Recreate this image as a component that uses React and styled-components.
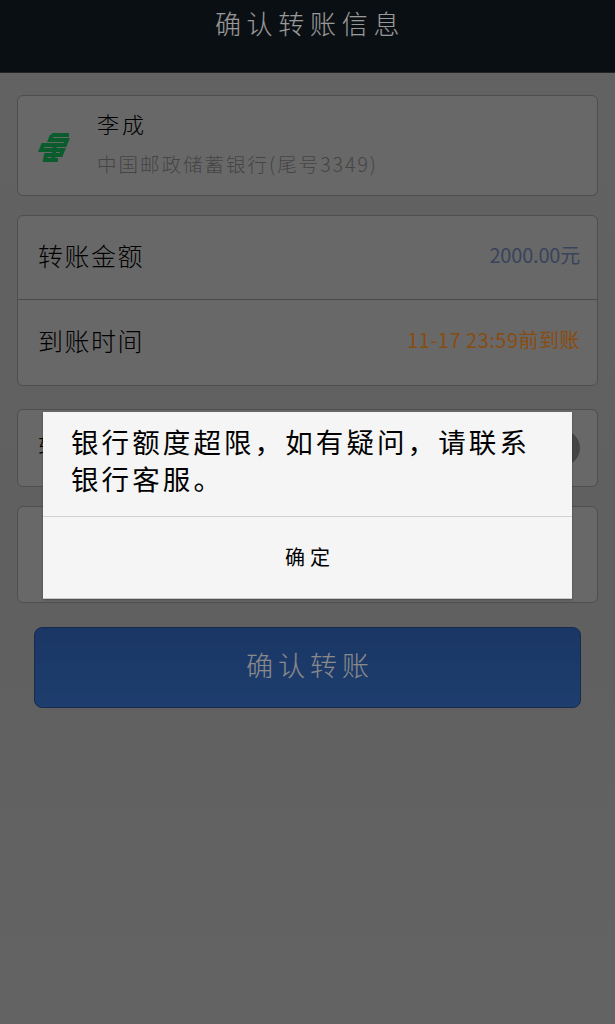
import React from 'react';
import styled, { createGlobalStyle } from 'styled-components';

const GlobalStyle = createGlobalStyle`
  html, body {
    margin: 0;
    padding: 0;
    background: #a5a5a5;
  }

  * {
    box-sizing: border-box;
  }
`;

const Page = styled.div`
  position: relative;
  width: 615px;
  height: 1024px;
  overflow: hidden;
  background: linear-gradient(#a4a4a4, #a0a0a0 60%, #a6a6a6);
  font-family: "Noto Sans CJK SC", "Noto Sans", sans-serif;
  font-weight: 300;
  color: #000;
`;

const Header = styled.header`
  height: 73px;
  padding: 4px 0 0 5px;
  background: #121a22;
  border-bottom: 1px solid #3a3e42;
  color: #fff;
  font-size: 26px;
  line-height: 38px;
  letter-spacing: 5.7px;
  text-align: center;
`;

const Content = styled.main`
  display: flex;
  flex-direction: column;
  padding: 22px 17px 0 17px;
`;

const Card = styled.section`
  height: ${props => props.$height}px;
  margin-bottom: ${props => props.$gap}px;
  background: #aeaeae;
  border: 1px solid #828282;
  border-radius: 6px;
`;

const PayeeCard = styled(Card)`
  display: flex;
  align-items: center;
  padding-left: 19px;
`;

const BankLogo = styled.svg`
  width: 33px;
  height: 31px;
  margin-right: 27px;
  margin-top: 4px;
  flex-shrink: 0;
`;

const Payee = styled.div`
  display: flex;
  flex-direction: column;
  gap: 10px;
  margin-top: -7px;
`;

const PayeeName = styled.div`
  font-size: 22px;
  line-height: 34px;
  letter-spacing: 3px;
`;

const PayeeBank = styled.div`
  font-size: 19.5px;
  line-height: 28px;
  color: #727272;
  letter-spacing: 2px;
`;

const Row = styled.div`
  display: flex;
  align-items: center;
  justify-content: space-between;
  height: ${props => props.$height}px;
  padding: 0 17px 6px 20px;
  border-bottom: ${props => (props.$divider ? '1px solid #7c7c7c' : 'none')};
`;

const RowLabel = styled.span`
  font-size: 25px;
  letter-spacing: 1.5px;
`;

const ClippedLabel = styled(RowLabel)`
  display: block;
  width: 5px;
  height: 36px;
  overflow: hidden;
`;

const RowValue = styled.span`
  font-size: 20px;
  font-weight: 400;
  color: ${props => props.$color};
  letter-spacing: ${props => props.$spacing}px;
`;

const SwitchKnob = styled.span`
  width: 36px;
  height: 36px;
  margin-top: 6px;
  border-radius: 50%;
  background: #747474;
`;

const SubmitButton = styled.button`
  display: block;
  width: 547px;
  height: 81px;
  margin: 7px 0 0 17px;
  padding: 0 0 6px 5px;
  background: linear-gradient(#2c5ba8, #3268b8);
  border: 1px solid #24477f;
  border-radius: 8px;
  color: #e6e6e6;
  font-family: inherit;
  font-weight: 300;
  font-size: 27px;
  letter-spacing: 5px;
`;

const Overlay = styled.div`
  position: absolute;
  inset: 0;
  background: rgba(0, 0, 0, 0.4);
`;

const Dialog = styled.div`
  position: absolute;
  left: 43px;
  top: 412px;
  width: 529px;
  height: 187px;
  background: #f5f5f5;
  border-bottom: 1px solid #c8c8c8;
  box-shadow: 0 1px 2px rgba(0, 0, 0, 0.3);
`;

const DialogMessage = styled.div`
  height: 105px;
  padding: 11px 18px 0 28px;
  border-bottom: 1px solid #d2d2d2;
  font-size: 27.5px;
  font-weight: 400;
  line-height: 37px;
  letter-spacing: 3.1px;
`;

const DialogAction = styled.div`
  display: flex;
  align-items: center;
  justify-content: center;
  height: 80px;
  padding: 0 0 2px 5px;
  font-size: 20px;
  font-weight: 400;
  letter-spacing: 5px;
`;

const App = () => {
  return (
    <Page>
      <GlobalStyle />
      <Header>确认转账信息</Header>
      <Content>
        <PayeeCard $height={101} $gap={19}>
          <BankLogo viewBox="0 0 33 31">
            <path
              fill="none"
              stroke="#129a4c"
              strokeWidth="4"
              d="M15 3H32M15 3L13 8H30L28 13H6L4 18H26L24 23H9L8 28H21M18 13L16 28"
            />
          </BankLogo>
          <Payee>
            <PayeeName>李成</PayeeName>
            <PayeeBank>中国邮政储蓄银行(尾号3349)</PayeeBank>
          </Payee>
        </PayeeCard>
        <Card $height={171} $gap={23}>
          <Row $height={84} $divider>
            <RowLabel>转账金额</RowLabel>
            <RowValue $color="#5f7098" $spacing={-0.2}>2000.00元</RowValue>
          </Row>
          <Row $height={85}>
            <RowLabel>到账时间</RowLabel>
            <RowValue $color="#e27f1c" $spacing={0.5}>11-17 23:59前到账</RowValue>
          </Row>
        </Card>
        <Card $height={78} $gap={19}>
          <Row $height={76}>
            <ClippedLabel>转</ClippedLabel>
            <SwitchKnob />
          </Row>
        </Card>
        <Card $height={97} $gap={17} />
        <SubmitButton>确认转账</SubmitButton>
      </Content>
      <Overlay />
      <Dialog>
        <DialogMessage>银行额度超限，如有疑问，请联系银行客服。</DialogMessage>
        <DialogAction>确定</DialogAction>
      </Dialog>
    </Page>
  );
};

export default App;
